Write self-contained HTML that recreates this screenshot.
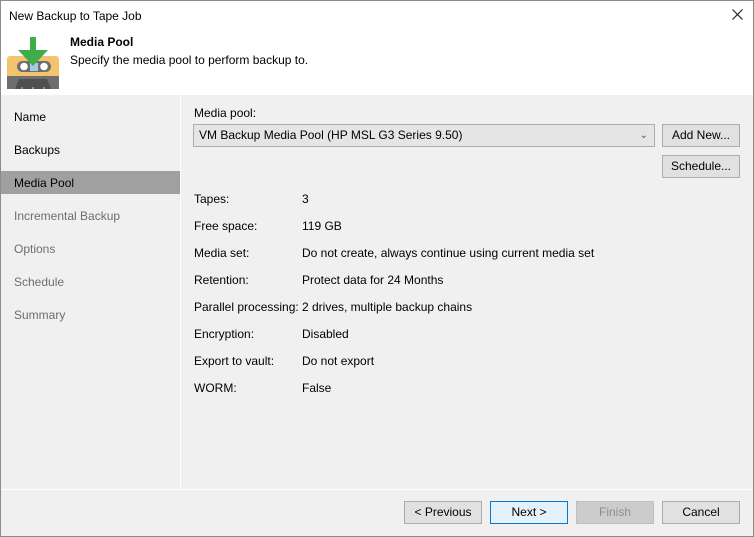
<!DOCTYPE html>
<html><head><style>
*{margin:0;padding:0;box-sizing:border-box}
body{width:754px;height:537px;position:relative;overflow:hidden;font-family:"Liberation Sans",sans-serif;font-size:12px;color:#000;background:#f0f0f0}
.a{position:absolute;white-space:nowrap}
.btn{position:absolute;height:23px;width:78px;border:1px solid #adadad;background:#e1e1e1;text-align:center;line-height:21px}
.nav{position:absolute;left:14px;color:#000}
.dis{color:#6d6d6d}
</style></head><body>
<div class="a" style="left:0;top:0;width:754px;height:95px;background:#fff"></div>
<div class="a" style="left:0;top:0;width:754px;height:537px;border:1px solid #8c8c8c"></div>
<div class="a" style="left:9px;top:9px;font-size:12px">New Backup to Tape Job</div>
<svg class="a" style="left:732px;top:9px" width="11" height="11" viewBox="0 0 11 11"><path d="M0.5 0.5L10.5 10.5M10.5 0.5L0.5 10.5" stroke="#222" stroke-width="1.2"/></svg>
<svg class="a" style="left:7px;top:37px" width="53" height="53" viewBox="0 0 53 53">
<rect x="0" y="19" width="52" height="33" rx="3" fill="#f2c46e"/>
<rect x="0" y="39" width="52" height="13" fill="#6e6e6e"/>
<path d="M8 52 L12 42 H40 L44 52Z" fill="#4f4f4f"/>
<circle cx="15" cy="51" r="0.8" fill="#ddd"/><circle cx="26" cy="51" r="0.8" fill="#ddd"/><circle cx="37" cy="51" r="0.8" fill="#ddd"/>
<rect x="10" y="24" width="34" height="11" rx="5.5" fill="#6e6e6e"/>
<circle cx="17" cy="29.5" r="3.8" fill="#fff"/>
<circle cx="37" cy="29.5" r="3.8" fill="#fff"/>
<rect x="23" y="26" width="8" height="8" fill="#a8c8e8"/>
<path d="M23 0 H29 V13 H41 L26 29 L11 13 H23Z" fill="#3fae49"/>
</svg>
<div class="a" style="left:70px;top:35px;font-weight:bold;font-size:12px">Media Pool</div>
<div class="a" style="left:70px;top:53px">Specify the media pool to perform backup to.</div>
<div class="a" style="left:180px;top:95px;width:1px;height:394px;background:#fff"></div>
<div class="a" style="left:1px;top:171px;width:179px;height:23px;background:#a0a0a0"></div>
<div class="nav a" style="top:110px">Name</div>
<div class="nav a" style="top:143px">Backups</div>
<div class="nav a" style="top:176px">Media Pool</div>
<div class="nav a dis" style="top:209px">Incremental Backup</div>
<div class="nav a dis" style="top:242px">Options</div>
<div class="nav a dis" style="top:275px">Schedule</div>
<div class="nav a dis" style="top:308px">Summary</div>
<div class="a" style="left:194px;top:106px">Media pool:</div>
<div class="a" style="left:193px;top:124px;width:462px;height:23px;border:1px solid #adadad;background:#e5e5e5;padding-left:5px;line-height:21px">VM Backup Media Pool (HP MSL G3 Series 9.50)<span style="position:absolute;right:6px;top:0;color:#555;font-size:10px">&#8964;</span></div>
<div class="btn" style="left:662px;top:124px">Add New...</div>
<div class="btn" style="left:662px;top:155px">Schedule...</div>
<div class="a" style="left:194px;top:192px">Tapes:</div><div class="a" style="left:302px;top:192px">3</div>
<div class="a" style="left:194px;top:219px">Free space:</div><div class="a" style="left:302px;top:219px">119 GB</div>
<div class="a" style="left:194px;top:246px">Media set:</div><div class="a" style="left:302px;top:246px">Do not create, always continue using current media set</div>
<div class="a" style="left:194px;top:273px">Retention:</div><div class="a" style="left:302px;top:273px">Protect data for 24 Months</div>
<div class="a" style="left:194px;top:300px">Parallel processing:</div><div class="a" style="left:302px;top:300px">2 drives, multiple backup chains</div>
<div class="a" style="left:194px;top:327px">Encryption:</div><div class="a" style="left:302px;top:327px">Disabled</div>
<div class="a" style="left:194px;top:354px">Export to vault:</div><div class="a" style="left:302px;top:354px">Do not export</div>
<div class="a" style="left:194px;top:381px">WORM:</div><div class="a" style="left:302px;top:381px">False</div>
<div class="a" style="left:1px;top:489px;width:752px;height:1px;background:#fff"></div>
<div class="btn" style="left:404px;top:501px">&lt; Previous</div>
<div class="btn" style="left:490px;top:501px;border-color:#0078d7;background:#e5f1fb">Next &gt;</div>
<div class="btn" style="left:576px;top:501px;border-color:#bfbfbf;background:#cccccc;color:#8d8d8d">Finish</div>
<div class="btn" style="left:662px;top:501px">Cancel</div>
</body></html>
